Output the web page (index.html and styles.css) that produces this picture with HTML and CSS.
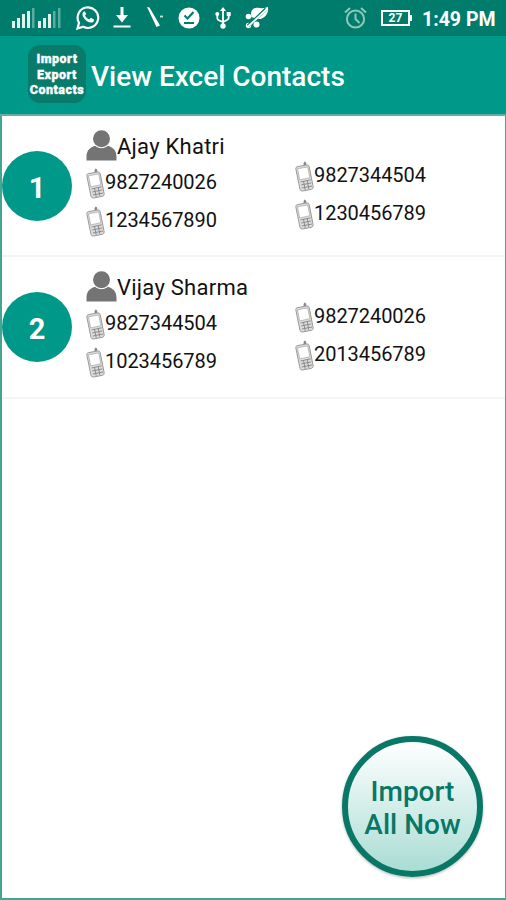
FILE: index.html
```html
<!DOCTYPE html>
<html lang="en">
<head>
<meta charset="utf-8">
<title>View Excel Contacts</title>
<link rel="stylesheet" href="styles.css">
</head>
<body>
<svg class="defs" aria-hidden="true">
  <symbol id="person" viewBox="0 0 31 31">
    <path d="M.5 30.500V27c0-4.500 1.500-8 6-10.300l2.500-.9c4 3.200 9 3.200 13 0l2.500.9c4.500 2.300 6 5.800 6 10.300v3.500z" fill="#747474"/>
    <circle cx="15.500" cy="8.700" r="9.300" fill="#fff"/>
    <circle cx="15.500" cy="8.700" r="8.500" fill="#747474"/>
  </symbol>
  <symbol id="phone" viewBox="0 0 19 31">
    <path d="M9 4.200V1.700q.8-1.500 1.800 0V4" fill="#888" stroke="#7d7d7d" stroke-width=".8"/>
    <path d="M2.200 5.700 12 3.900q1.800 0 2.200 1.700L18.200 26q0 1.800-1.800 2.300L7.500 30q-2 .2-2.500-1.600L.8 7.800Q.6 6.200 2.200 5.700z" fill="#ddd" stroke="#999" stroke-width="1"/>
    <path d="M2.500 7.800 12.700 5.900l2.200 10.800-10.200 2.200z" fill="#fff" stroke="#a5a5a5" stroke-width=".7"/>
    <path d="m5.500 21 10.200-2.200M6.200 24l10.100-2.100M6.800 27l10.200-2M8.500 20.400l1.700 8.400M12.200 19.500l1.600 8.300" stroke="#8c8c8c" stroke-width="1" fill="none"/>
  </symbol>
</svg>
<div class="screen">
  <div class="status">
    <svg class="signal" width="49" height="20" viewBox="0 0 49 20" fill="#e2f3ee">
      <path d="M0 13h3v7H0zM5 10h3v10H5zM10 6h3v14h-3zM15 3h3v17h-3zM26 13h3v7h-3zM31 10h3v10h-3zM36 6h3v14h-3z"/>
      <path opacity=".4" d="M20 0h2.500v20H20zM41 3h2.500v17H41zM46 0h2.500v20H46z"/>
    </svg>
    <svg class="whatsapp" width="24" height="25" viewBox="0 0 24 25">
      <path d="M1.500 23.500 3 17.800A10.300 10.300 0 1 1 7.200 21.800z" fill="none" stroke="#fff" stroke-width="2.200"/>
      <path d="M8 6.500c-2 1.200-2 3.700-.3 6.300 2.300 3.500 5.800 5.500 8.500 4.600 1.600-.6 2-1.900 1.700-3l-3-1.600-1.600 1.800c-2-.8-3.400-2.300-4.300-4l1.200-1.500-1.300-2.700z" fill="#fff"/>
    </svg>
    <svg class="download" width="18" height="21" viewBox="0 0 18 21" fill="#fff"><path d="M7.500 0h3v8h4.500l-6 7.500L3 8h4.500zM.5 18.500h17v2H.5z"/></svg>
    <svg class="wand" width="18" height="21" viewBox="0 0 18 21"><path d="M0 0 2.500.5 13 18.500 9.500 20z" fill="#fff"/><path d="M13 9.500h3" stroke="#c4e3db" stroke-width="1.800"/></svg>
    <svg class="check" width="22" height="22" viewBox="0 0 22 22"><circle cx="11" cy="11" r="10.500" fill="#fff"/><path d="m6.500 8.500 3 3 6-6.500M6 16h10" fill="none" stroke="#007c6d" stroke-width="2.100"/></svg>
    <svg class="usb" width="16" height="22" viewBox="0 0 16 22"><path d="M8 3v16M2.300 7v4q0 2 2 2.500L8 15l4-2q1.700-.8 1.700-2.500V7" fill="none" stroke="#fff" stroke-width="1.800"/><path d="m8 0 3 4H5zM11.700 5h4v4h-4z" fill="#fff"/><circle cx="2.300" cy="7" r="2" fill="#fff"/><circle cx="8" cy="19" r="2.700" fill="#fff"/></svg>
    <svg class="leaf" width="24" height="22" viewBox="0 0 24 22"><path d="M6.500 10C5 4 8 0 13 .8q4 1.200 10-.8c1 7-4 13-11 12z" fill="#fff"/><circle cx="3.500" cy="9.500" r="2.800" fill="#fff"/><circle cx="11.500" cy="17.500" r="3" fill="#fff"/><circle cx="3.500" cy="18.500" r="2.700" fill="#fff"/><path d="M3 19 21 2" stroke="#007c6d" stroke-width="3.200"/><path d="M2.500 20 22 2" stroke="#fff" stroke-width="1.800"/></svg>
    <svg class="alarm" width="23" height="22" viewBox="0 0 23 22" fill="none" stroke="#8cc9bb" stroke-width="2"><circle cx="11.500" cy="12" r="8.600"/><path d="M11.500 6.500V12l4 4M1 5.500 6 1M17 1l5 4.500"/></svg>
    <div class="battery"><span>27</span></div>
    <div class="time">1:49 PM</div>
  </div>
  <header class="bar">
    <div class="logo"><span>Import</span><span>Export</span><span>Contacts</span></div>
    <h1>View Excel Contacts</h1>
  </header>
  <main class="list">
    <section class="row">
      <div class="num">1</div>
      <div class="first">
        <div class="name"><svg width="31" height="31"><use href="#person"/></svg><span>Ajay Khatri</span></div>
        <div class="tel"><svg width="19" height="31"><use href="#phone"/></svg><span>9827240026</span></div>
        <div class="tel"><svg width="19" height="31"><use href="#phone"/></svg><span>1234567890</span></div>
      </div>
      <div class="second">
        <div class="tel"><svg width="19" height="31"><use href="#phone"/></svg><span>9827344504</span></div>
        <div class="tel"><svg width="19" height="31"><use href="#phone"/></svg><span>1230456789</span></div>
      </div>
    </section>
    <section class="row">
      <div class="num">2</div>
      <div class="first">
        <div class="name"><svg width="31" height="31"><use href="#person"/></svg><span>Vijay Sharma</span></div>
        <div class="tel"><svg width="19" height="31"><use href="#phone"/></svg><span>9827344504</span></div>
        <div class="tel"><svg width="19" height="31"><use href="#phone"/></svg><span>1023456789</span></div>
      </div>
      <div class="second">
        <div class="tel"><svg width="19" height="31"><use href="#phone"/></svg><span>9827240026</span></div>
        <div class="tel"><svg width="19" height="31"><use href="#phone"/></svg><span>2013456789</span></div>
      </div>
    </section>
  </main>
  <button class="fab">Import<br>All Now</button>
</div>
</body>
</html>
```

FILE: styles.css
```css
* { box-sizing: border-box; }
body { margin: 0; font-family: Roboto, "Liberation Sans", sans-serif; background: #fff; }
svg { display: block; flex: none; }
.defs { position: absolute; width: 0; height: 0; }
.screen { position: relative; height: 900px; display: flex; flex-direction: column; overflow: hidden; }
.status { height: 36px; flex: none; display: flex; align-items: center; padding-left: 12px; background: #007c6d; border-bottom: 1px solid #00705f; }
.whatsapp { margin-left: 15px; }
.download { margin-left: 13px; }
.wand { margin-left: 16px; }
.check { margin-left: 13px; }
.usb { margin-left: 15px; }
.leaf { margin-left: 14px; }
.alarm { margin-left: 75px; }
.battery { position: relative; flex: none; width: 29px; height: 16px; margin-left: 14px; border: 2px solid #fff; display: flex; align-items: center; justify-content: center; color: #fff; font-size: 12px; font-weight: 700; line-height: 12px; }
.battery::after { content: ""; position: absolute; left: 27px; top: 3px; width: 2px; height: 6px; background: #fff; }
.time { margin-left: 12px; padding-top: 3px; color: #fff; font-size: 19.500px; font-weight: 700; white-space: nowrap; }
.bar { height: 80px; flex: none; display: flex; align-items: center; padding: 0 0 2px 28px; background: #009888; border-bottom: 2px solid #62aea2; }
.logo { width: 58px; height: 58px; border-radius: 12px; background: #087b6b; display: flex; flex-direction: column; align-items: center; padding-top: 6px; color: #fff; font: 900 12.500px/15.700px Roboto, sans-serif; letter-spacing: .5px; -webkit-text-stroke: .3px #fff; }
.bar h1 { margin: 5px 0 0 5px; color: #fff; font-size: 28px; font-weight: 500; line-height: 34px; white-space: nowrap; }
.list { flex: 1; border: solid #45a592; border-width: 0 1px 2px 2px; }
.row { height: 142px; display: flex; border-bottom: 2px solid #f4f4f4; }
.row:first-child { height: 141px; }
.num { width: 70px; height: 70px; flex: none; margin-top: 35px; border-radius: 50%; background: #009888; color: #fff; font-size: 29px; font-weight: 700; line-height: 75px; text-align: center; }
.first { width: 209px; margin-left: 14px; padding-top: 14px; }
.name, .tel { display: flex; align-items: center; white-space: nowrap; color: #111; }
.name { height: 31px; font-size: 22px; letter-spacing: .25px; }
.name span { margin-top: 1px; }
.tel { height: 31px; margin-top: 7px; font-size: 20px; line-height: 24px; }
.tel span { margin-top: -3px; letter-spacing: -.05px; }
.second { padding-top: 38px; }
.fab { position: absolute; left: 342px; top: 736px; width: 141px; height: 141px; padding: 2px 0 0; border: 6px solid #087766; border-radius: 50%; background: linear-gradient(#fff, #a9ddd4); box-shadow: 0 1px 3px rgba(0, 0, 0, .3); color: #087766; font: 500 28px/33px Roboto, sans-serif; text-align: center; }
```
